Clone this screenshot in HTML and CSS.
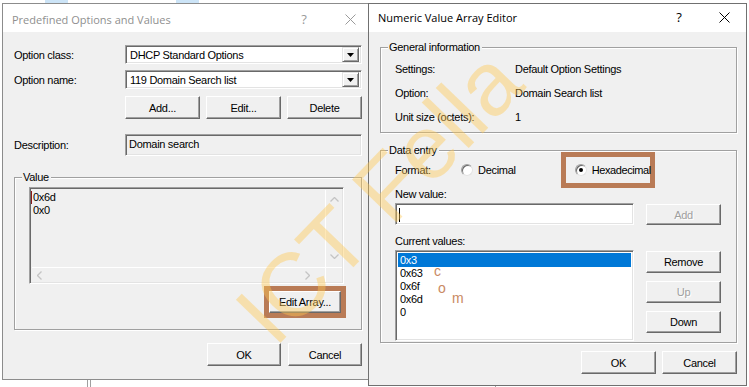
FILE: index.html
```html
<!DOCTYPE html>
<html>
<head>
<meta charset="utf-8">
<title>Predefined Options and Values</title>
<link rel="stylesheet" href="styles.css">
</head>
<body>
<div class="bg-tab bg-tab1"></div>
<div class="bg-tab bg-tab2"></div>
<div class="bg-vline bg-vline1"></div>
<div class="bg-vline bg-vline2"></div>
<div class="bg-vline bg-vline3"></div>

<section class="win win-left">
  <header class="titlebar tb-left">
    <span class="title title-inactive">Predefined Options and Values</span>
    <span class="tb-help tb-help-left">?</span>
    <span class="tb-close tb-close-left"><svg width="11" height="11" viewBox="0 0 11 11"><path d="M0.5 0.5 L10.5 10.5 M10.5 0.5 L0.5 10.5"/></svg></span>
  </header>
  <div class="client lc">
    <div class="frow">
      <span class="lbl">Option class:</span>
      <div class="combo"><span class="combo-text">DHCP Standard Options</span><span class="drop"><svg width="7" height="4" viewBox="0 0 7 4"><path d="M0 0 H7 L3.5 4 Z"/></svg></span></div>
    </div>
    <div class="frow">
      <span class="lbl">Option name:</span>
      <div class="combo"><span class="combo-text">119 Domain Search list</span><span class="drop"><svg width="7" height="4" viewBox="0 0 7 4"><path d="M0 0 H7 L3.5 4 Z"/></svg></span></div>
    </div>
    <div class="btnrow">
      <button class="btn">Add...</button>
      <button class="btn">Edit...</button>
      <button class="btn">Delete</button>
    </div>
    <div class="drow">
      <span class="lbl">Description:</span>
      <div class="field field-ro">Domain search</div>
    </div>
    <div class="group value-group">
      <span class="legend">Value</span>
      <div class="valbox">
        <div class="valtext"><span class="caret"></span><div>0x6d</div><div>0x0</div></div>
        <div class="vscroll">
          <svg width="9" height="5" viewBox="0 0 9 5"><polyline points="0.5,4.5 4.5,0.5 8.5,4.5"/></svg>
          <svg width="9" height="5" viewBox="0 0 9 5"><polyline points="0.5,0.5 4.5,4.5 8.5,0.5"/></svg>
        </div>
        <div class="hscroll">
          <svg width="5" height="9" viewBox="0 0 5 9"><polyline points="4.5,0.5 0.5,4.5 4.5,8.5"/></svg>
          <svg width="5" height="9" viewBox="0 0 5 9"><polyline points="0.5,0.5 4.5,4.5 0.5,8.5"/></svg>
        </div>
        <div class="corner"></div>
      </div>
      <div class="earow">
        <div class="hl"><button class="btn btn-ea">Edit Array...</button></div>
      </div>
    </div>
    <div class="okrow okrow-left">
      <button class="btn btn-ok">OK</button>
      <button class="btn btn-ok">Cancel</button>
    </div>
  </div>
</section>

<section class="win win-right">
  <header class="titlebar tb-right">
    <span class="title">Numeric Value Array Editor</span>
    <span class="tb-help tb-help-right">?</span>
    <span class="tb-close tb-close-right"><svg width="11" height="11" viewBox="0 0 11 11"><path d="M0.5 0.5 L10.5 10.5 M10.5 0.5 L0.5 10.5"/></svg></span>
  </header>
  <div class="client rc">
    <div class="group gen-group">
      <span class="legend">General information</span>
      <div class="info">
        <span>Settings:</span><span>Default Option Settings</span>
        <span>Option:</span><span>Domain Search list</span>
        <span>Unit size (octets):</span><span>1</span>
      </div>
    </div>
    <div class="group data-group">
      <span class="legend">Data entry</span>
      <div class="fmtrow">
        <span class="fmt-lbl">Format:</span>
        <span class="radio"><span class="rdot"></span>Decimal</span>
        <span class="radio radio-hex"><span class="rdot on"></span>Hexadecimal</span>
      </div>
      <div class="nv-lbl">New value:</div>
      <div class="nvrow">
        <div class="field field-white"><span class="icaret"></span></div>
        <button class="btn btn-side" disabled>Add</button>
      </div>
      <div class="cv-lbl">Current values:</div>
      <div class="cvrow">
        <div class="listbox">
          <div class="item sel">0x3</div>
          <div class="item">0x63</div>
          <div class="item">0x6f</div>
          <div class="item">0x6d</div>
          <div class="item">0</div>
          <span class="wm-com wm-c">c</span>
          <span class="wm-com wm-o">o</span>
          <span class="wm-com wm-m">m</span>
        </div>
        <div class="sidebtns">
          <button class="btn btn-side">Remove</button>
          <button class="btn btn-side" disabled>Up</button>
          <button class="btn btn-side">Down</button>
        </div>
      </div>
      <div class="hl hl-hex"></div>
    </div>
    <div class="okrow okrow-right">
      <button class="btn btn-ok2">OK</button>
      <button class="btn btn-ok2">Cancel</button>
    </div>
  </div>
</section>

<div class="watermark">ICT Fella</div>
</body>
</html>
```

FILE: styles.css
```css
* { box-sizing: border-box; margin: 0; padding: 0; }
html, body { width: 749px; height: 387px; overflow: hidden; background: #fff; }
body {
  position: relative;
  font-family: "Liberation Sans", Arial, sans-serif;
  font-size: 11px;
  letter-spacing: -0.3px;
  color: #000;
}

/* background desktop bits */
.bg-tab { position: absolute; top: 0; height: 3px; background: #cce4f7; }
.bg-tab1 { left: 45px; width: 23px; }
.bg-tab2 { left: 176px; width: 23px; }
.bg-vline { position: absolute; width: 1px; background: #a0a0a0; }
.bg-vline1 { left: 87px; top: 379px; height: 8px; }
.bg-vline2 { left: 90px; top: 379px; height: 8px; }
.bg-vline3 { left: 495px; top: 385px; height: 2px; }

/* windows */
.win {
  position: absolute;
  background: #f0f0f0;
  border: 1px solid #8c8c8c;
  display: flex;
  flex-direction: column;
}
.win-left { left: 2px; top: 3px; width: 367px; height: 377px; }
.win-right { left: 368px; top: 3px; width: 379px; height: 383px; border-color: #707070; }

.titlebar {
  height: 28px;
  flex: none;
  background: #fff;
  display: flex;
  align-items: center;
  font-family: "Open Sans", sans-serif;
  font-size: 11px;
  letter-spacing: 0;
  padding-left: 9px;
}
.tb-left { padding-top: 2px; }
.tb-right { padding-bottom: 2px; }
.title { flex: 1; white-space: nowrap; }
.title-inactive { color: #8f8f8f; }
.tb-help, .tb-close { display: flex; justify-content: center; align-items: center; font-size: 13px; }
.tb-help-left { width: 56px; color: #9a9a9a; }
.tb-close-left { width: 36px; }
.tb-help-right { width: 46px; color: #000; }
.tb-close-right { width: 44px; }
.tb-close svg path { stroke: #000; stroke-width: 1; fill: none; }
.tb-close-left svg path { stroke: #9a9a9a; }

/* common controls */
.btn {
  font: inherit;
  letter-spacing: inherit;
  color: #000;
  background: #f0f0f0;
  border: 1px solid;
  border-color: #fff #696969 #696969 #fff;
  box-shadow: inset -1px -1px #a0a0a0;
  display: flex;
  align-items: center;
  justify-content: center;
}
.btn:disabled { color: #a0a0a0; text-shadow: 1px 1px #fff; }

.combo, .field, .valbox, .listbox {
  border: 1px solid;
  border-color: #a0a0a0 #fff #fff #a0a0a0;
  box-shadow: inset 1px 1px #696969, inset -1px -1px #e3e3e3;
}

.group {
  border: 1px solid #a0a0a0;
  box-shadow: inset 1px 1px #fff, 1px 1px #fff;
  padding-left: 14px;
}
.legend {
  display: block;
  width: max-content;
  height: 13px;
  line-height: 13px;
  margin: -7px 0 0 -7px;
  padding: 0 2px 0 1px;
  background: #f0f0f0;
}

/* left dialog */
.lc { padding: 13px 6px 0 11px; }
.frow {
  display: grid;
  grid-template-columns: 111px 1fr;
  align-items: center;
  height: 19px;
}
.frow + .frow { margin-top: 6px; }
.combo {
  height: 19px;
  background: #fff;
  display: flex;
  align-items: center;
  justify-content: space-between;
  padding: 2px;
}
.combo-text { padding-left: 2px; }
.drop {
  width: 17px;
  height: 15px;
  background: #f0f0f0;
  border: 1px solid;
  border-color: #e3e3e3 #696969 #696969 #e3e3e3;
  box-shadow: inset 1px 1px #fff, inset -1px -1px #a0a0a0;
  display: flex;
  align-items: center;
  justify-content: center;
}
.drop svg path { fill: #000; }

.btnrow {
  margin-top: 7px;
  margin-left: 111px;
  display: grid;
  grid-template-columns: 1fr 1fr 1fr;
  gap: 6px;
}
.btnrow .btn { height: 23px; }

.drow {
  margin-top: 15px;
  display: grid;
  grid-template-columns: 111px 1fr;
  align-items: start;
}
.drow .lbl { padding-top: 5px; }
.field-ro {
  height: 22px;
  background: #f0f0f0;
  padding: 3px 3px;
  line-height: 13px;
}

.value-group {
  margin-top: 21px;
  height: 153px;
  padding-right: 14px;
}
.valbox {
  margin-top: 3px;
  width: 315px;
  height: 97px;
  background: #f0f0f0;
  padding: 2px 1px 1px 2px;
  display: grid;
  grid-template-columns: 1fr 17px;
  grid-template-rows: 1fr 15px;
}
.valtext {
  position: relative;
  padding: 1px 0 0 1px;
  line-height: 13px;
}
.caret {
  position: absolute;
  left: -1px;
  top: 1px;
  width: 1px;
  height: 13px;
  background: #8b1a1a;
}
.vscroll {
  border-left: 1px solid #fff;
  display: flex;
  flex-direction: column;
  justify-content: space-between;
  align-items: center;
  padding: 7px 0 8px;
}
.hscroll {
  border-top: 1px solid #fff;
  display: flex;
  justify-content: space-between;
  align-items: center;
  padding: 0 15px 0 5px;
}
.vscroll polyline, .hscroll polyline { fill: none; stroke: #c4c4c4; stroke-width: 1.3; }
.corner { border-top: 1px solid #fff; border-left: 1px solid #fff; }

.earow {
  margin-top: 2px;
  display: flex;
  justify-content: flex-end;
  padding-right: 1px;
}
.hl {
  border: 5px solid #b97b56;
}
.btn-ea { width: 72px; height: 22px; }

.okrow { display: flex; justify-content: flex-end; }
.okrow-left { margin-top: 13px; gap: 7px; }
.btn-ok { width: 74px; height: 23px; }

/* right dialog */
.rc { padding: 15px 9px 0 11px; }
.gen-group { height: 86px; }
.info {
  margin-top: 3px;
  display: grid;
  grid-template-columns: 120px 1fr;
  grid-auto-rows: 24px;
  align-items: center;
}
.data-group {
  position: relative;
  margin-top: 17px;
  height: 193px;
}
.fmtrow {
  margin-top: 3px;
  height: 20px;
  display: flex;
  align-items: center;
}
.fmt-lbl { width: 66px; }
.radio { display: flex; align-items: center; gap: 5px; }
.radio-hex { margin-left: 59px; position: relative; z-index: 1; letter-spacing: -0.4px; }
.rdot {
  width: 12px;
  height: 12px;
  border-radius: 50%;
  background: #fff;
  border: 1px solid;
  border-color: #a0a0a0 #e3e3e3 #e3e3e3 #a0a0a0;
  box-shadow: inset 1px 1px #696969;
  display: flex;
  align-items: center;
  justify-content: center;
}
.rdot.on::after {
  content: "";
  width: 4px;
  height: 4px;
  border-radius: 50%;
  background: #000;
}
.hl-hex {
  position: absolute;
  left: 180px;
  top: 1px;
  width: 94px;
  height: 36px;
}
.nv-lbl { margin-top: 7px; height: 14px; line-height: 14px; }
.nvrow {
  margin-top: 2px;
  display: flex;
  gap: 12px;
  align-items: flex-start;
}
.field-white {
  width: 239px;
  height: 22px;
  background: #fff;
  padding: 4px 3px;
}
.icaret { display: block; width: 1px; height: 14px; background: #000; }
.btn-side { width: 75px; height: 22px; }
.nvrow .btn-side { margin-top: 1px; height: 21px; }
.cv-lbl { margin-top: 9px; height: 14px; line-height: 14px; }
.cvrow {
  margin-top: 2px;
  display: flex;
  gap: 12px;
  align-items: flex-start;
}
.listbox {
  position: relative;
  width: 239px;
  height: 91px;
  background: #fff;
  padding: 2px 2px 0 2px;
}
.item { height: 13px; line-height: 13px; padding-left: 2px; }
.item.sel { background: #0078d7; color: #fff; height: 14px; line-height: 14px; }
.wm-com {
  position: absolute;
  font-size: 14px;
  letter-spacing: 0;
  color: #c98a62;
  line-height: 14px;
}
.wm-c { left: 38px; top: 13px; }
.wm-o { left: 42px; top: 30px; }
.wm-m { left: 56px; top: 40px; }
.sidebtns { display: flex; flex-direction: column; gap: 8px; margin-top: 1px; }

.okrow-right { margin-top: 8px; gap: 6px; }
.btn-ok2 { width: 75px; height: 23px; }

/* watermark */
.watermark {
  position: absolute;
  left: 220px;
  top: 296px;
  font-family: "Liberation Sans", Arial, sans-serif;
  font-size: 90px;
  line-height: 1;
  letter-spacing: 0;
  white-space: nowrap;
  color: rgba(255, 200, 80, 0.42);
  transform-origin: 0 0;
  transform: rotate(-46deg);
  pointer-events: none;
}
```
